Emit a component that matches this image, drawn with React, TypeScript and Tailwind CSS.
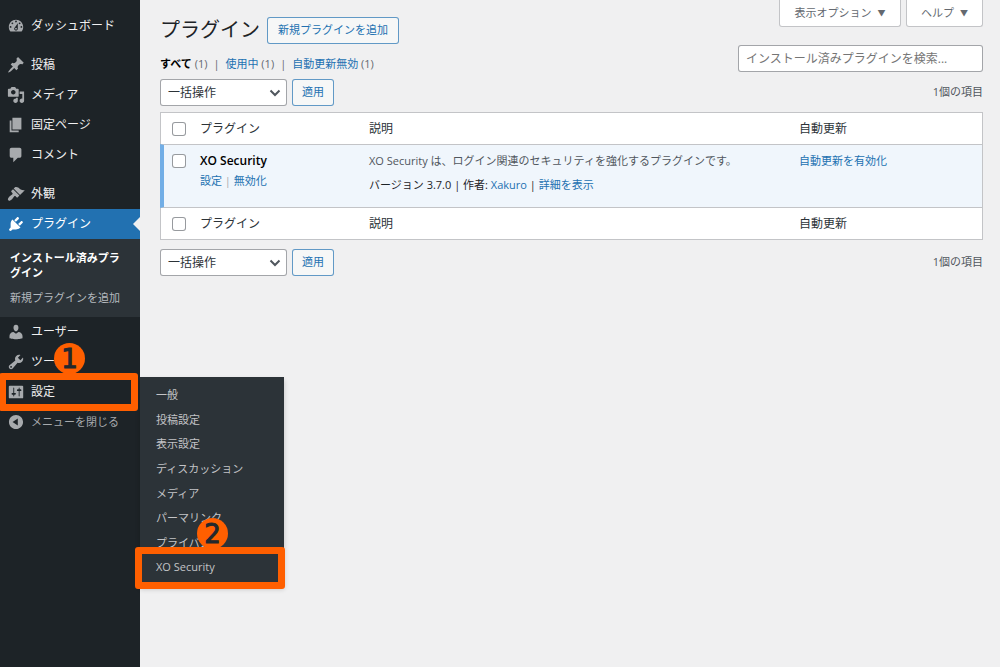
import type { ReactNode } from "react";

const ICONS = {
  dashboard:
    "M3.76 16h12.48c1.1-1.37 1.76-3.11 1.76-5 0-4.42-3.58-8-8-8s-8 3.58-8 8c0 1.89.66 3.63 1.76 5zM10 4c.55 0 1 .45 1 1s-.45 1-1 1-1-.45-1-1 .45-1 1-1zM6 6c.55 0 1 .45 1 1s-.45 1-1 1-1-.45-1-1 .45-1 1-1zM14 6c.55 0 1 .45 1 1s-.45 1-1 1-1-.45-1-1 .45-1 1-1zm-5.37 5.55L12 7v6c0 1.1-.9 2-2 2s-2-.9-2-2c0-.57.24-1.08.63-1.45zM4 10c.55 0 1 .45 1 1s-.45 1-1 1-1-.45-1-1 .45-1 1-1zm12 0c.55 0 1 .45 1 1s-.45 1-1 1-1-.45-1-1 .45-1 1-1zm-5 3c0-.55-.45-1-1-1s-1 .45-1 1 .45 1 1 1 1-.45 1-1z",
  posts:
    "M10.44 3.02l1.82-1.82 6.36 6.35-1.83 1.82c-1.05-.68-2.48-.57-3.41.36l-.75.75c-.92.93-1.04 2.35-.35 3.41l-1.83 1.82-2.41-2.41-2.8 2.79c-.42.42-3.38 2.71-3.8 2.29s1.86-3.39 2.28-3.81l2.79-2.79L4.1 9.36l1.83-1.82c1.05.69 2.48.57 3.4-.36l.75-.75c.93-.92 1.05-2.35.36-3.41z",
  media:
    "M13 11V4c0-.55-.45-1-1-1h-1.67L9 1H5L3.67 3H2c-.55 0-1 .45-1 1v7c0 .55.45 1 1 1h10c.55 0 1-.45 1-1zM7 4.5c1.38 0 2.5 1.12 2.5 2.5S8.38 9.5 7 9.5 4.5 8.38 4.5 7 5.62 4.5 7 4.5zM14 6h5v10.5c0 1.38-1.12 2.5-2.5 2.5S14 17.88 14 16.5s1.12-2.5 2.5-2.5c.17 0 .34.02.5.05V9h-3V6zm-4 8.05V13h2v3.5c0 1.38-1.12 2.5-2.5 2.5S7 17.88 7 16.5 8.12 14 9.5 14c.17 0 .34.02.5.05z",
  pages: "M6 15V2h10v13H6zm-1 1h8v2H3V5h2v11z",
  comments:
    "M5 2h9c1.1 0 2 .9 2 2v7c0 1.1-.9 2-2 2h-2l-5 5v-5H5c-1.1 0-2-.9-2-2V4c0-1.1.9-2 2-2z",
  appearance:
    "M14.48 11.06L7.41 3.99l1.5-1.5c.5-.56 2.3-.47 3.51.32 1.21.8 1.43 1.28 2.91 2.1 1.18.64 2.45 1.26 4.45.85zm-.71.71L6.7 4.7 4.93 6.47c-.39.39-.39 1.02 0 1.41l1.06 1.06c.39.39.39 1.03 0 1.42-.6.6-1.43 1.11-2.21 1.69-.35.26-.7.53-1.01.84C1.43 14.23.4 16.08 1.4 17.07c.99 1 2.84-.03 4.18-1.36.31-.31.58-.66.85-1.02.57-.78 1.08-1.61 1.69-2.21.39-.39 1.02-.39 1.41 0l1.06 1.06c.39.39 1.02.39 1.41 0z",
  plugins:
    "M13.11 4.36L9.87 7.6 8 5.73l3.24-3.24c.35-.34 1.05-.2 1.56.32.52.51.66 1.21.31 1.55zm-8 1.77l.91-1.12 9.01 9.01-1.19.84c-.71.71-2.63 1.16-3.82 1.16H6.14L4.9 17.26c-.59.59-1.54.59-2.12 0-.59-.58-.59-1.53 0-2.12l1.24-1.24v-3.88c0-1.13.4-3.19 1.09-3.89zm7.26 3.97l3.24-3.24c.34-.35 1.04-.21 1.55.31.52.51.66 1.21.31 1.55l-3.24 3.25z",
  users:
    "M10 9.25c-2.27 0-2.73-3.44-2.73-3.44C7 4.02 7.82 2 9.97 2c2.16 0 2.98 2.02 2.71 3.81 0 0-.41 3.44-2.68 3.44zm0 2.57L12.72 10c2.39 0 4.52 2.33 4.52 4.53v2.49s-3.65 1.13-7.24 1.13c-3.65 0-7.24-1.13-7.24-1.13v-2.49c0-2.25 1.94-4.48 4.47-4.48z",
  tools:
    "M16.68 9.77c-1.34 1.34-3.3 1.67-4.95.99l-5.41 6.52c-.99.99-2.59.99-3.58 0s-.99-2.59 0-3.57l6.52-5.42c-.68-1.65-.35-3.61.99-4.95 1.28-1.28 3.12-1.62 4.72-1.06l-2.89 2.89 2.82 2.82 2.86-2.87c.53 1.58.18 3.39-1.08 4.65zM3.81 16.21c.4.39 1.04.39 1.43 0 .4-.4.4-1.04 0-1.43-.39-.4-1.03-.4-1.43 0-.39.39-.39 1.03 0 1.43z",
  settings:
    "M18 16V4c0-.55-.45-1-1-1H3c-.55 0-1 .45-1 1v12c0 .55.45 1 1 1h14c.55 0 1-.45 1-1zM8 11h1c.55 0 1 .45 1 1s-.45 1-1 1H8v1.5c0 .28-.22.5-.5.5s-.5-.22-.5-.5V13H6c-.55 0-1-.45-1-1s.45-1 1-1h1V5.5c0-.28.22-.5.5-.5s.5.22.5.5V11zm5-2h-1c-.55 0-1-.45-1-1s.45-1 1-1h1V5.5c0-.28.22-.5.5-.5s.5.22.5.5V7h1c.55 0 1 .45 1 1s-.45 1-1 1h-1v5.5c0 .28-.22.5-.5.5s-.5-.22-.5-.5V9z",
  collapse:
    "M10 2.16c4.33 0 7.84 3.51 7.84 7.84s-3.51 7.84-7.84 7.84S2.16 14.33 2.16 10 5.67 2.16 10 2.16zm2 11.72V6.12L6.18 9.97z",
};

type IconName = keyof typeof ICONS;

function Icon({ name, className }: { name: IconName; className: string }) {
  return (
    <svg viewBox="0 0 20 20" className={`size-[18px] shrink-0 ${className}`} fill="currentColor" fillRule="evenodd" aria-hidden="true">
      <path d={ICONS[name]} />
    </svg>
  );
}

function MenuItem({ icon, label, current = false, children }: { icon: IconName; label: string; current?: boolean; children?: ReactNode }) {
  return (
    <li className="relative">
      <a
        href="#"
        className={`flex h-[30px] items-center gap-[6px] pl-[7px] text-[12px] whitespace-nowrap ${current ? "bg-[#2271b1] text-white" : "text-[#f0f0f1]"}`}
      >
        <Icon name={icon} className={current ? "text-white" : "text-[#a7aaad]"} />
        {label}
      </a>
      {current && (
        <span className="absolute top-[8px] right-0 border-y-[7px] border-r-[7px] border-y-transparent border-r-[#f0f0f1]" />
      )}
      {children}
    </li>
  );
}

function StepBadge({ step, className }: { step: number; className: string }) {
  return (
    <span
      className={`absolute z-20 flex size-[31px] items-center justify-center rounded-full bg-[#ff5f00] font-['DejaVu_Sans',sans-serif] text-[26px] leading-none text-[#23282d] [-webkit-text-stroke:1px_#23282d] ${className}`}
    >
      {step}
    </span>
  );
}

const FLYOUT = ["一般", "投稿設定", "表示設定", "ディスカッション", "メディア", "パーマリンク", "プライバシー", "XO Security"];

function SettingsFlyout() {
  return (
    <ul className="absolute top-0 left-full z-10 grid h-[209px] w-[144px] auto-rows-fr bg-[#2c3338] py-[6px] text-[11px] text-[#c3c4c7] shadow-[0_3px_5px_rgba(0,0,0,0.2)]">
      {FLYOUT.map((label, i) => (
        <li key={label} className="relative">
          <a href="#" className="flex h-full items-center pl-4 whitespace-nowrap">
            {label}
          </a>
          {i === FLYOUT.length - 1 && (
            <>
              <span className="pointer-events-none absolute -top-2 -left-[5px] h-[42px] w-[150px] rounded-[3px] border-[7px] border-[#ff5f00]" />
              <StepBadge step={2} className="-top-[37px] left-[57px]" />
            </>
          )}
        </li>
      ))}
    </ul>
  );
}

function Sidebar() {
  return (
    <nav aria-label="メインメニュー" className="w-[140px] shrink-0 bg-[#1d2327] pt-[11px]">
      <ul>
        <MenuItem icon="dashboard" label="ダッシュボード" />
      </ul>
      <ul className="mt-[9px]">
        <MenuItem icon="posts" label="投稿" />
        <MenuItem icon="media" label="メディア" />
        <MenuItem icon="pages" label="固定ページ" />
        <MenuItem icon="comments" label="コメント" />
      </ul>
      <ul className="mt-[9px]">
        <MenuItem icon="appearance" label="外観" />
        <MenuItem icon="plugins" label="プラグイン" current>
          <ul className="flex h-[78px] flex-col gap-[10px] bg-[#2c3338] px-[10px] pt-[11px] text-[11px] leading-[15px]">
            <li>
              <a href="#" className="block font-bold text-white">
                インストール済みプラ
                <br />
                グイン
              </a>
            </li>
            <li>
              <a href="#" className="block whitespace-nowrap text-[#b4b9be]">新規プラグインを追加</a>
            </li>
          </ul>
        </MenuItem>
        <MenuItem icon="users" label="ユーザー" />
        <MenuItem icon="tools" label="ツール" />
        <MenuItem icon="settings" label="設定">
          <SettingsFlyout />
          <span className="pointer-events-none absolute -top-1 -left-px z-10 h-[38px] w-[139px] rounded-[3px] border-[7px] border-[#ff5f00]" />
          <StepBadge step={1} className="-top-[34px] left-[54px]" />
        </MenuItem>
        <li>
          <button type="button" className="flex h-[30px] w-full items-center gap-[6px] pl-[7px] text-[11px] whitespace-nowrap text-[#a7aaad]">
            <Icon name="collapse" className="text-[#a7aaad]" />
            メニューを閉じる
          </button>
        </li>
      </ul>
    </nav>
  );
}

const BUTTON = "flex items-center justify-center rounded-[3px] border border-[#2271b1]/70 bg-[#f6f7f7] text-[#2271b1] whitespace-nowrap";

function BulkActions() {
  return (
    <div className="flex items-center gap-[5px]">
      <div className="relative">
        <select
          aria-label="一括操作を選択"
          className="block h-[27px] w-[127px] appearance-none rounded-[3px] border border-[#8c8f94]/80 bg-white pr-6 pl-[7px] text-[12px] text-[#2c3338]"
        >
          <option>一括操作</option>
        </select>
        <svg viewBox="0 0 12 8" className="pointer-events-none absolute top-[10px] right-[6px] h-[8px] w-[12px] fill-none stroke-[#50575e] stroke-2" aria-hidden="true">
          <path d="M1.500 1.500 6 6l4.500-4.500" />
        </svg>
      </div>
      <button type="button" className={`${BUTTON} h-[27px] w-[42px] text-[11px]`}>適用</button>
      <span className="ml-auto text-[11px] text-[#50575e]">1個の項目</span>
    </div>
  );
}

function Check({ label }: { label: string }) {
  return <input type="checkbox" aria-label={label} className="block size-[14px] appearance-none rounded-[3px] border border-[#8c8f94]/90 bg-white" />;
}

function HeadingRow() {
  return (
    <tr className="h-[31px] bg-white text-left text-[12px] text-[#2c3338]">
      <td className="border-l border-[#c3c4c7] pl-[11px]"><Check label="すべて選択" /></td>
      <th scope="col" className="font-normal">プラグイン</th>
      <th scope="col" className="font-normal">説明</th>
      <th scope="col" className="border-r border-[#c3c4c7] font-normal">自動更新</th>
    </tr>
  );
}

const LINK = "text-[#2271b1]";

function PluginTable() {
  return (
    <table className="mt-[6px] mb-[9px] w-full table-fixed border-separate border-spacing-0 border-y border-[#c3c4c7] [&_td]:py-0 [&_th]:py-0">
      <colgroup>
        <col className="w-[40px]" />
        <col className="w-[169px]" />
        <col />
        <col className="w-[184px]" />
      </colgroup>
      <thead><HeadingRow /></thead>
      <tbody>
        <tr className="h-[64px] bg-[#f0f6fc] align-top text-[11px] leading-[20px] [&>td]:border-y [&>td]:border-[#c3c4c7]">
          <td className="border-l-[4px] !border-l-[#72aee6] pl-[8px]">
            <div className="pt-[9px]"><Check label="XO Security を選択" /></div>
          </td>
          <td className="pt-[6px]!">
            <strong className="block text-[12px] font-semibold text-black">XO Security</strong>
            <span className="block text-[#a7aaad]">
              <a href="#" className={LINK}>設定</a> | <a href="#" className={LINK}>無効化</a>
            </span>
          </td>
          <td className="pt-[6px]!">
            <p className="text-[#50575e]">XO Security は、ログイン関連のセキュリティを強化するプラグインです。</p>
            <p className="mt-[4px] text-[#1d2327]">
              バージョン 3.7.0 | 作者: <a href="#" className={LINK}>Xakuro</a> | <a href="#" className={LINK}>詳細を表示</a>
            </p>
          </td>
          <td className="border-r pt-[6px]!">
            <a href="#" className={LINK}>自動更新を有効化</a>
          </td>
        </tr>
      </tbody>
      <tfoot><HeadingRow /></tfoot>
    </table>
  );
}

const TAB = "flex h-[27px] items-center justify-center gap-[6px] rounded-b-[3px] border border-t-0 border-[#c3c4c7] bg-white text-[11px] text-[#646970]";

export default function App() {
  return (
    <div className="flex min-h-screen bg-[#f0f0f1] font-['Open_Sans','Noto_Sans_CJK_JP',sans-serif] text-[#3c434a]">
      <Sidebar />
      <main className="min-w-0 flex-1 pr-[17px] pl-5">
        <header className="flex h-[79px] justify-between">
          <div className="pt-[16px]">
            <div className="flex items-center gap-[7px]">
              <h1 className="text-[20px] leading-[28px] whitespace-nowrap text-[#1d2327]">プラグイン</h1>
              <a href="#" className={`${BUTTON} h-[27px] px-[10px] text-[11px]`}>新規プラグインを追加</a>
            </div>
            <ul className="mt-[10px] flex gap-[6px] text-[11px] leading-[20px] whitespace-nowrap text-[#646970]">
              <li><a href="#" className="font-bold text-black">すべて</a> (1)</li>
              <li>|</li>
              <li><a href="#" className={LINK}>使用中</a> (1)</li>
              <li>|</li>
              <li><a href="#" className={LINK}>自動更新無効</a> (1)</li>
            </ul>
          </div>
          <div className="flex flex-col items-end gap-[18px]">
            <div className="flex gap-[5px]">
              <button type="button" className={`${TAB} w-[122px]`}>
                表示オプション <span className="text-[8px]">▼</span>
              </button>
              <button type="button" className={`${TAB} w-[77px]`}>
                ヘルプ <span className="text-[8px]">▼</span>
              </button>
            </div>
            <input
              type="search"
              aria-label="インストール済みプラグインを検索"
              placeholder="インストール済みプラグインを検索..."
              className="h-[27px] w-[245px] rounded-[3px] border border-[#8c8f94]/80 bg-white px-[7px] text-[12px] placeholder:text-[#757575]"
            />
          </div>
        </header>
        <BulkActions />
        <PluginTable />
        <BulkActions />
      </main>
    </div>
  );
}
